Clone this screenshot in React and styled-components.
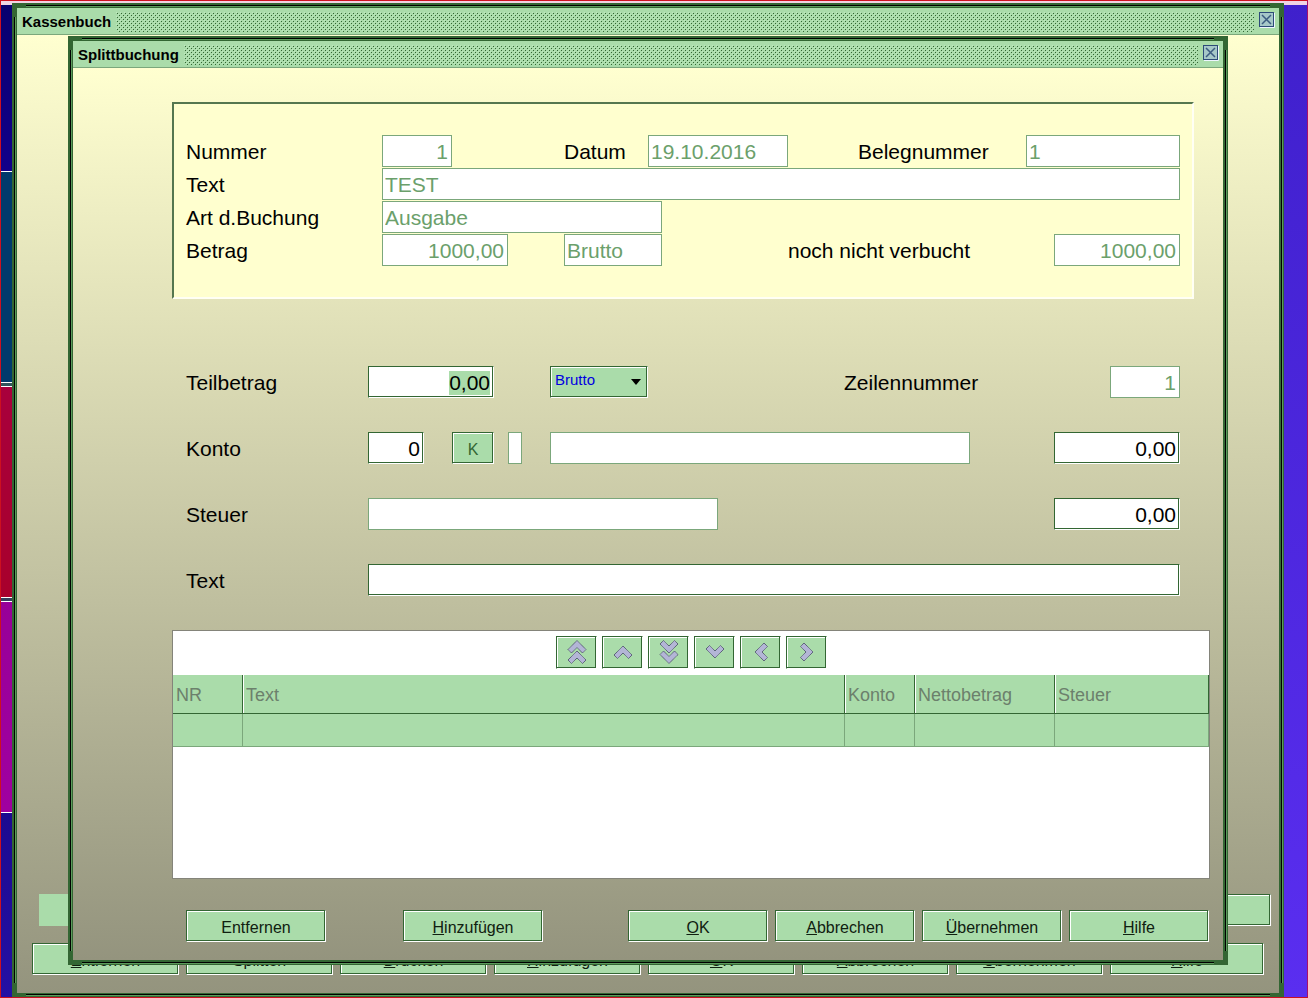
import React, { useEffect, useRef } from "react";
import styled, { createGlobalStyle, css } from "styled-components";

const DARK = "#336633";
const GREEN = "#aadcaa";
const SOFT = "#7ba77b";

const CHEVRON = "0,9 9,0 18,9 14.5,12.5 9,7 3.5,12.5";

const navButtons = [
    { label: "Erste Seite", turn: 0, double: true },
    { label: "Zurück", turn: 0 },
    { label: "Letzte Seite", turn: 180, double: true },
    { label: "Weiter", turn: 180 },
    { label: "Links", turn: 270 },
    { label: "Rechts", turn: 90 },
];

const ledgerButtons = [
    ["E", "ntfernen"],
    ["", "Splitten"],
    ["D", "rucken"],
    ["H", "inzufügen"],
    ["O", "K"],
    ["A", "bbrechen"],
    ["Ü", "bernehmen"],
    ["H", "ilfe"],
];

const Chevron = ({ turn, double }) => (
    <svg width="24" height="24" viewBox="0 0 24 24" aria-hidden="true">
        <g
            transform={`rotate(${turn} 12 12)`}
            fill="#b3b5d6"
            stroke="#3c3c5c"
            strokeDasharray="1 0.6"
        >
            <polygon
                points={CHEVRON}
                transform={`translate(3 ${double ? 0.5 : 6})`}
            />
            {double && <polygon points={CHEVRON} transform="translate(3 11)" />}
        </g>
    </svg>
);

const CloseIcon = () => (
    <svg width="17" height="17" viewBox="0 0 17 17" aria-hidden="true">
        <path d="M1 15.5h14.5v-14.5" fill="none" stroke="#eef6ff" />
        <rect x="1" y="1" width="13" height="13" fill="#a6c8c8" />
        <rect
            x="0.5"
            y="0.5"
            width="14"
            height="14"
            fill="none"
            stroke="#2c4a78"
        />
        <path
            d="M3 3l9 9M12 3l-9 9"
            stroke="#3c5c80"
            strokeWidth="1.5"
        />
    </svg>
);

const TitleBar = ({ title }) => (
    <STitleBar>
        <STitle>{title}</STitle>
        <SBumps />
        <SClose type="button" aria-label={`${title} schließen`}>
            <CloseIcon />
        </SClose>
    </STitleBar>
);

const App = () => {
    const amount = useRef(null);

    useEffect(() => {
        amount.current.focus();
        amount.current.select();
    }, []);

    return (
        <SDesktop>
            <GlobalStyle />
            <SGutter>
                <SStripe $size={167} $from="#08006e" $to="#12008a" />
                <SStripe $size={211} $from="#003a6c" $to="#003a6c" $line />
                <SStripe $size={3} $from="#33555c" $to="#33555c" $line />
                <SStripe $size={211} $from="#a8003c" $to="#a8002c" $line />
                <SStripe $size={3} $from="#33405c" $to="#33405c" $line />
                <SStripe $size={211} $from="#980098" $to="#a000a0" $line />
                <SStripe $size={185} $from="#1c0a90" $to="#2410a4" $line />
            </SGutter>
            <SWindow $main>
                <TitleBar title="Kassenbuch" />
                <SWorkspace>
                    <SLedger>
                        <SStatusRow>
                            <SStatus />
                            <SButton type="button" aria-label="Status" />
                        </SStatusRow>
                        <SLedgerButtons>
                            {ledgerButtons.map(([key, rest]) => (
                                <SButton type="button" key={key + rest}>
                                    <u>{key}</u>
                                    {rest}
                                </SButton>
                            ))}
                        </SLedgerButtons>
                    </SLedger>
                    <SWindow $dialog role="dialog" aria-label="Splittbuchung">
                        <TitleBar title="Splittbuchung" />
                        <SDialogBody>
                            <SSummary>
                                <SRow>
                                    <SLabel htmlFor="nummer" $col={1} $span={14}>
                                        Nummer
                                    </SLabel>
                                    <SField id="nummer" $col={15} $span={5} $right disabled defaultValue="1" />
                                    <SLabel htmlFor="datum" $col={28} $span={6}>
                                        Datum
                                    </SLabel>
                                    <SField id="datum" $col={34} $span={10} disabled defaultValue="19.10.2016" />
                                    <SLabel htmlFor="beleg" $col={49} $span={12}>
                                        Belegnummer
                                    </SLabel>
                                    <SField id="beleg" $col={61} $span={11} disabled defaultValue="1" />
                                </SRow>
                                <SRow>
                                    <SLabel htmlFor="kopftext" $col={1} $span={14}>
                                        Text
                                    </SLabel>
                                    <SField id="kopftext" $col={15} $span={57} disabled defaultValue="TEST" />
                                </SRow>
                                <SRow>
                                    <SLabel htmlFor="art" $col={1} $span={14}>
                                        Art d.Buchung
                                    </SLabel>
                                    <SField id="art" $col={15} $span={20} disabled defaultValue="Ausgabe" />
                                </SRow>
                                <SRow>
                                    <SLabel htmlFor="betrag" $col={1} $span={14}>
                                        Betrag
                                    </SLabel>
                                    <SField id="betrag" $col={15} $span={9} $right disabled defaultValue="1000,00" />
                                    <SField aria-label="Betragsart" $col={28} $span={7} disabled defaultValue="Brutto" />
                                    <SLabel htmlFor="offen" $col={44} $span={19}>
                                        noch nicht verbucht
                                    </SLabel>
                                    <SField id="offen" $col={63} $span={9} $right disabled defaultValue="1000,00" />
                                </SRow>
                            </SSummary>
                            <SForm>
                                <SRow>
                                    <SLabel htmlFor="teilbetrag" $col={1} $span={13}>
                                        Teilbetrag
                                    </SLabel>
                                    <SField id="teilbetrag" ref={amount} $col={14} $span={9} $right defaultValue="0,00" />
                                    <SSelectBox $col={27} $span={7}>
                                        <SSelect aria-label="Art des Teilbetrags" defaultValue="Brutto">
                                            <option>Brutto</option>
                                            <option>Netto</option>
                                        </SSelect>
                                    </SSelectBox>
                                    <SLabel htmlFor="zeile" $col={48} $span={19}>
                                        Zeilennummer
                                    </SLabel>
                                    <SField id="zeile" $col={67} $span={5} $right disabled defaultValue="1" />
                                </SRow>
                                <SRow>
                                    <SLabel htmlFor="konto" $col={1} $span={13}>
                                        Konto
                                    </SLabel>
                                    <SField id="konto" $col={14} $span={4} $right defaultValue="0" />
                                    <SButton type="button" $col={20} $span={3} $muted>
                                        K
                                    </SButton>
                                    <SField aria-label="Kontoart" $col={24} $span={1} disabled />
                                    <SField aria-label="Kontobezeichnung" $col={27} $span={30} disabled />
                                    <SField aria-label="Nettobetrag" $col={63} $span={9} $right defaultValue="0,00" />
                                </SRow>
                                <SRow>
                                    <SLabel htmlFor="steuer" $col={1} $span={13}>
                                        Steuer
                                    </SLabel>
                                    <SField id="steuer" $col={14} $span={25} disabled />
                                    <SField aria-label="Steuerbetrag" $col={63} $span={9} $right defaultValue="0,00" />
                                </SRow>
                                <SRow>
                                    <SLabel htmlFor="text" $col={1} $span={13}>
                                        Text
                                    </SLabel>
                                    <SField id="text" $col={14} $span={58} />
                                </SRow>
                            </SForm>
                            <SList>
                                <SToolbar>
                                    {navButtons.map(({ label, turn, double }) => (
                                        <SNavButton type="button" key={label} aria-label={label}>
                                            <Chevron turn={turn} double={double} />
                                        </SNavButton>
                                    ))}
                                </SToolbar>
                                <STable>
                                    <colgroup>
                                        <SCol $width={70} />
                                        <SCol />
                                        <SCol $width={70} />
                                        <SCol $width={140} />
                                        <SCol $width={154} />
                                    </colgroup>
                                    <thead>
                                        <tr>
                                            <th>NR</th>
                                            <th>Text</th>
                                            <th>Konto</th>
                                            <th>Nettobetrag</th>
                                            <th>Steuer</th>
                                        </tr>
                                    </thead>
                                    <tbody>
                                        <tr>
                                            <td />
                                            <td />
                                            <td />
                                            <td />
                                            <td />
                                        </tr>
                                    </tbody>
                                </STable>
                            </SList>
                            <SFooter>
                                <SButtonGroup $gap={77}>
                                    <SButton type="button">Entfernen</SButton>
                                    <SButton type="button">
                                        <u>H</u>inzufügen
                                    </SButton>
                                </SButtonGroup>
                                <SButtonGroup $gap={7}>
                                    <SButton type="button">
                                        <u>O</u>K
                                    </SButton>
                                    <SButton type="button">
                                        <u>A</u>bbrechen
                                    </SButton>
                                    <SButton type="button">
                                        <u>Ü</u>bernehmen
                                    </SButton>
                                    <SButton type="button">
                                        <u>H</u>ilfe
                                    </SButton>
                                </SButtonGroup>
                            </SFooter>
                        </SDialogBody>
                    </SWindow>
                </SWorkspace>
            </SWindow>
        </SDesktop>
    );
};

const GlobalStyle = createGlobalStyle`
    *, *::before, *::after {
        box-sizing: border-box;
    }
    body {
        margin: 0;
    }
    body, button, input, select {
        font-family: "Liberation Sans", Arial, sans-serif;
    }
`;

const gridPlace = css`
    grid-column: ${({ $col, $span }) => ($col ? `${$col} / span ${$span}` : "auto")};
`;

/* dark line with a white edge lower right, used by buttons and open fields */
const etched = css`
    border: 1px solid;
    border-color: ${DARK} #ffffff #ffffff ${DARK};
`;

const SDesktop = styled.div`
    display: grid;
    grid-template-columns: 11px minmax(0, 1fr) 23px;
    min-height: 100vh;
    border: 1px solid #cc1020;
    border-right-color: #a81068;
    background: linear-gradient(#f0d4e4, #f0d4e4) 0 0 / 100% 4px no-repeat,
        linear-gradient(#3f20cc, #5a2ef0);
`;

const SGutter = styled.div`
    display: flex;
    flex-direction: column;
    padding-top: 4px;
`;

const SStripe = styled.div`
    flex: ${({ $size }) => $size} 0 0;
    border-top: ${({ $line }) => ($line ? "1px solid #ffffff" : "none")};
    background: linear-gradient(
        ${({ $from }) => $from},
        ${({ $to }) => $to}
    );
`;

const SWindow = styled.section`
    display: flex;
    flex-direction: column;
    padding: 5px;
    background:
        linear-gradient(#000000 50%, #5c9c5c 50%) 14px 2px / calc(100% - 28px) 2px no-repeat,
        linear-gradient(#000000 50%, #5c9c5c 50%) 14px calc(100% - 1px) / calc(100% - 28px) 2px no-repeat,
        linear-gradient(90deg, #000000 50%, #5c9c5c 50%) 2px 14px / 2px calc(100% - 28px) no-repeat,
        linear-gradient(90deg, #000000 50%, #5c9c5c 50%) calc(100% - 1px) 14px / 2px calc(100% - 28px) no-repeat,
        ${DARK};
    ${({ $main }) =>
        $main &&
        css`
            margin-top: 2px;
            padding-bottom: 4px;
        `}
    ${({ $dialog }) =>
        $dialog &&
        css`
            grid-area: 1 / 1;
            z-index: 1;
            margin: 1px 51px 28px;
        `}
`;

const STitleBar = styled.header`
    display: flex;
    align-items: center;
    height: 27px;
    padding: 2px 3px 0 5px;
    border-bottom: 1px solid ${SOFT};
    background-color: ${GREEN};
`;

const STitle = styled.h1`
    margin: 0;
    font-size: 15px;
    line-height: 20px;
    font-weight: bold;
    color: #000000;
`;

const SBumps = styled.div`
    flex: 1;
    height: 20px;
    margin: 0 5px;
    background:
        conic-gradient(from 270deg at 1px 1px, #bfe8bf 90deg, transparent 0) 0 0 / 4px 4px,
        conic-gradient(from 270deg at 1px 1px, ${DARK} 90deg, transparent 0) 1px 1px / 4px 4px,
        conic-gradient(from 270deg at 1px 1px, #bfe8bf 90deg, transparent 0) 2px 2px / 4px 4px,
        conic-gradient(from 270deg at 1px 1px, ${DARK} 90deg, transparent 0) 3px 3px / 4px 4px;
`;

const SClose = styled.button`
    align-self: flex-start;
    display: flex;
    margin-top: 2px;
    padding: 0;
    border: none;
    background: none;
`;

const SWorkspace = styled.div`
    flex: 1;
    display: grid;
    background: linear-gradient(#ffffd0, #94947e);
`;

const SLedger = styled.div`
    grid-area: 1 / 1;
    display: flex;
    flex-direction: column;
    justify-content: flex-end;
    gap: 17px;
    padding-bottom: 18px;
`;

const SButton = styled.button`
    ${gridPlace}
    ${etched}
    height: 32px;
    padding: 3px 0 0;
    background-color: ${GREEN};
    box-shadow:
        inset -1px -1px 0 ${DARK},
        inset 1px 1px 0 #ffffff;
    font-size: 16px;
    line-height: 20px;
    color: ${({ $muted }) => ($muted ? "#336633" : "#102010")};
`;

const SStatusRow = styled.div`
    display: flex;
    margin: 0 8px 0 22px;

    ${SButton} {
        width: 140px;
    }
`;

const SStatus = styled.div`
    flex: 1;
    background-color: ${GREEN};
`;

const SLedgerButtons = styled.div`
    display: grid;
    grid-template-columns: repeat(8, minmax(0, 1fr));
    margin: 0 15px;

    ${SButton}:not(:last-child) {
        margin-right: 7px;
    }
`;

const SDialogBody = styled.div`
    flex: 1;
    display: flex;
    flex-direction: column;
    padding: 34px 13px 18px 99px;
    background: linear-gradient(#ffffd0, #94947e);
`;

const SSummary = styled.div`
    display: flex;
    flex-direction: column;
    gap: 1px;
    margin-right: 16px;
    padding: 31px 12px;
    border: 2px solid;
    border-color: #55774f #fffff4 #fffff4 #55774f;
    background-color: #ffffcf;
`;

const SForm = styled.form`
    display: flex;
    flex-direction: column;
    gap: 34px;
    margin: 67px 30px 34px 14px;
`;

/* one column is one character of the form */
const SRow = styled.div`
    display: grid;
    grid-template-columns: repeat(71, minmax(0, 1fr));
    align-items: center;
    height: 32px;
`;

const SLabel = styled.label`
    ${gridPlace}
    padding-top: 2px;
    font-size: 21px;
    line-height: 30px;
    white-space: nowrap;
    color: #000000;
`;

const SField = styled.input`
    ${gridPlace}
    ${etched}
    width: 100%;
    min-width: 0;
    height: 32px;
    margin: 0;
    padding: 2px 3px 0 2px;
    border-radius: 0;
    outline: none;
    background-color: #ffffff;
    box-shadow: inset -1px -1px 0 ${DARK};
    font-size: 21px;
    line-height: 28px;
    text-align: ${({ $right }) => ($right ? "right" : "left")};
    color: #000000;
    caret-color: transparent;

    &::selection {
        background-color: ${GREEN};
        color: #000000;
    }

    &:disabled {
        border-color: ${SOFT};
        box-shadow: none;
        color: #6ba06b;
    }
`;

const SSelectBox = styled.div`
    ${gridPlace}
    position: relative;

    &::after {
        content: "";
        position: absolute;
        top: 13px;
        right: 7px;
        border: 5px solid transparent;
        border-top: 6px solid #000000;
        border-bottom: none;
        pointer-events: none;
    }
`;

const SSelect = styled.select`
    ${etched}
    display: block;
    appearance: none;
    width: 100%;
    height: 32px;
    padding: 0 20px 5px 4px;
    border-radius: 0;
    background-color: ${GREEN};
    box-shadow:
        inset -1px -1px 0 ${DARK},
        inset 1px 1px 0 #ffffff;
    font-size: 15px;
    color: #0000e0;
`;

const SList = styled.div`
    flex: 1;
    min-height: 249px;
    border: 1px solid #84847a;
    background-color: #ffffff;
`;

const SToolbar = styled.div`
    display: flex;
    justify-content: center;
    gap: 6px;
    padding: 5px 0 6px;
`;

const SNavButton = styled(SButton)`
    display: flex;
    align-items: center;
    justify-content: center;
    width: 41px;
    height: 33px;
    margin-right: -1px;
    padding: 0 0 2px;
`;

const STable = styled.table`
    width: 100%;
    table-layout: fixed;
    border-collapse: separate;
    border-spacing: 0;
    background-color: ${GREEN};

    th {
        height: 39px;
        padding: 2px 0 0 3px;
        border-right: 1px solid ${DARK};
        border-bottom: 1px solid ${DARK};
        font-size: 18px;
        line-height: 24px;
        font-weight: normal;
        text-align: left;
        color: #6c806c;
    }

    th + th {
        box-shadow: inset 1px 0 0 #ffffff;
    }

    td {
        height: 33px;
        padding: 0;
        border-right: 1px solid ${SOFT};
        border-bottom: 1px solid ${SOFT};
    }
`;

const SCol = styled.col`
    width: ${({ $width }) => ($width ? `${$width}px` : "auto")};
`;

const SFooter = styled.footer`
    display: flex;
    justify-content: space-between;
    margin: 31px 1px 0 14px;
`;

const SButtonGroup = styled.div`
    display: flex;
    gap: ${({ $gap }) => $gap}px;

    ${SButton} {
        width: 140px;
    }
`;

export default App;
